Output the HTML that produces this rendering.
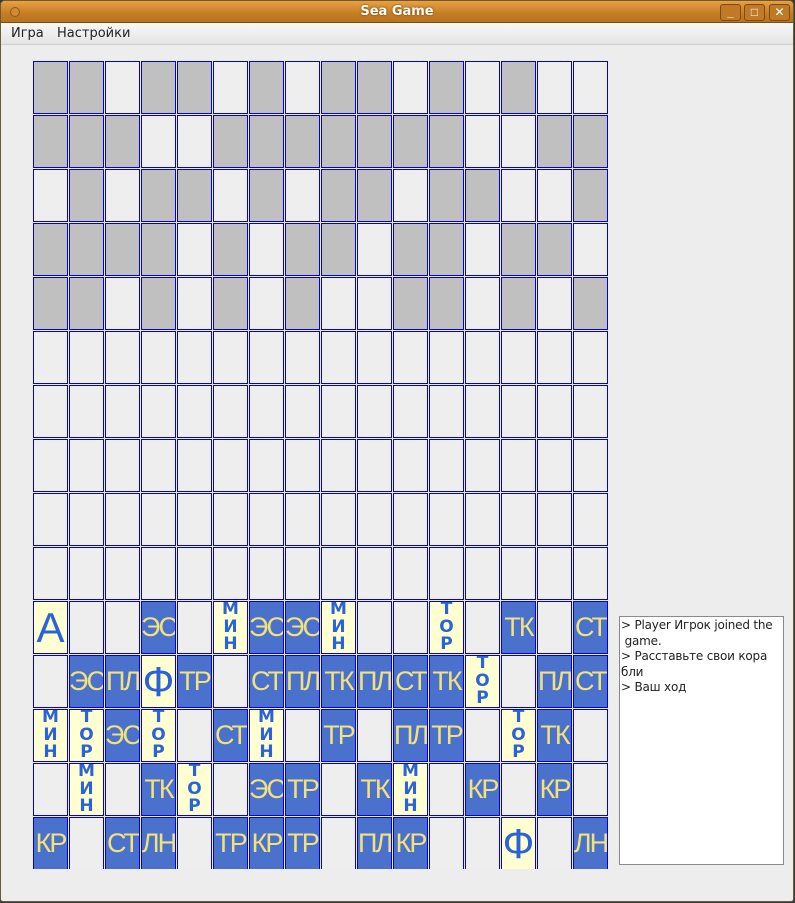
<!DOCTYPE html>
<html><head><meta charset="utf-8"><style>
*{margin:0;padding:0;box-sizing:border-box}
body{width:795px;height:903px;background:#3a3a3a;font-family:"Liberation Sans","DejaVu Sans",sans-serif;overflow:hidden;position:relative}
#win{position:absolute;left:0;top:0;width:794px;height:902px;background:#ededed;border:1px solid #6a5a3a;border-radius:5px 5px 3px 3px;overflow:hidden}
#title{position:absolute;left:0;top:0;width:100%;height:22px;background:linear-gradient(#e9a040,#c57d25 60%,#b8721f);border-bottom:1px solid #7a4e15}
#title .t{position:absolute;left:0;right:0;top:3px;text-align:center;color:#fff;font-weight:bold;font-size:13px;font-family:"DejaVu Sans",sans-serif;text-shadow:0 0 2px #6a3a00}
#title .c{position:absolute;left:9px;top:6px;width:10px;height:10px;border-radius:50%;border:1px solid #8a5a20;background:#d08a30}
.btn{position:absolute;top:3px;width:21px;height:17px;border:1px solid #7a4a10;border-radius:3px;background:#c07a25;color:#fff;font-size:12px;text-align:center;line-height:15px;font-weight:bold}
#menu{position:absolute;left:0;top:22px;width:100%;height:22px;background:linear-gradient(#f8f8f8,#e4e4e4);border-bottom:1px solid #cfcfcf;font-size:13px;color:#222;font-family:"DejaVu Sans",sans-serif}
#menu span{position:absolute;top:3px}
#grid{position:absolute;left:32px;top:60px;width:576px;height:808px;overflow:hidden;display:grid;grid-template-columns:repeat(16,35px);grid-auto-rows:53px;gap:1px}
#grid div{border:1px solid #0000e0;display:flex;align-items:center;justify-content:center;text-align:center;overflow:hidden;white-space:nowrap}
.g{background:#c0c0c0}.w{background:#eeeeee}
.b{background:#4a72cc;color:#f2e27a;font-size:27px;letter-spacing:-2px}
.y{background:#ffffd2;color:#2a62d8}
.v{font-size:17px;font-weight:bold;line-height:17.5px;white-space:normal!important;width:35px;font-family:"DejaVu Sans",sans-serif}
.big{font-size:42px}
#log{position:absolute;left:618px;top:615px;width:165px;height:249px;background:#fff;border:1px solid #8a8a8a;font-size:12px;line-height:15.5px;color:#222;padding:1px 0 0 1px;font-family:"DejaVu Sans",sans-serif;letter-spacing:-.2px}
</style></head><body><div id="win">
<div id="title"><div class="c"></div><div class="t">Sea Game</div>
<div class="btn" style="left:719px">_</div><div class="btn" style="left:743px">□</div><div class="btn" style="left:768px">✕</div></div>
<div id="menu"><span style="left:10px">Игра</span><span style="left:56px">Настройки</span></div>
<div id="grid">
<div class="g"></div><div class="g"></div><div class="w"></div><div class="g"></div><div class="g"></div><div class="w"></div><div class="g"></div><div class="w"></div><div class="g"></div><div class="g"></div><div class="w"></div><div class="g"></div><div class="w"></div><div class="g"></div><div class="w"></div><div class="w"></div>
<div class="g"></div><div class="g"></div><div class="g"></div><div class="w"></div><div class="w"></div><div class="g"></div><div class="g"></div><div class="g"></div><div class="g"></div><div class="g"></div><div class="g"></div><div class="g"></div><div class="w"></div><div class="w"></div><div class="g"></div><div class="g"></div>
<div class="w"></div><div class="g"></div><div class="w"></div><div class="g"></div><div class="g"></div><div class="w"></div><div class="g"></div><div class="w"></div><div class="g"></div><div class="g"></div><div class="w"></div><div class="g"></div><div class="g"></div><div class="w"></div><div class="w"></div><div class="g"></div>
<div class="g"></div><div class="g"></div><div class="g"></div><div class="g"></div><div class="w"></div><div class="g"></div><div class="w"></div><div class="g"></div><div class="g"></div><div class="w"></div><div class="g"></div><div class="g"></div><div class="w"></div><div class="g"></div><div class="g"></div><div class="w"></div>
<div class="g"></div><div class="g"></div><div class="w"></div><div class="g"></div><div class="w"></div><div class="g"></div><div class="w"></div><div class="g"></div><div class="w"></div><div class="w"></div><div class="g"></div><div class="g"></div><div class="w"></div><div class="g"></div><div class="w"></div><div class="g"></div>
<div class="w"></div><div class="w"></div><div class="w"></div><div class="w"></div><div class="w"></div><div class="w"></div><div class="w"></div><div class="w"></div><div class="w"></div><div class="w"></div><div class="w"></div><div class="w"></div><div class="w"></div><div class="w"></div><div class="w"></div><div class="w"></div>
<div class="w"></div><div class="w"></div><div class="w"></div><div class="w"></div><div class="w"></div><div class="w"></div><div class="w"></div><div class="w"></div><div class="w"></div><div class="w"></div><div class="w"></div><div class="w"></div><div class="w"></div><div class="w"></div><div class="w"></div><div class="w"></div>
<div class="w"></div><div class="w"></div><div class="w"></div><div class="w"></div><div class="w"></div><div class="w"></div><div class="w"></div><div class="w"></div><div class="w"></div><div class="w"></div><div class="w"></div><div class="w"></div><div class="w"></div><div class="w"></div><div class="w"></div><div class="w"></div>
<div class="w"></div><div class="w"></div><div class="w"></div><div class="w"></div><div class="w"></div><div class="w"></div><div class="w"></div><div class="w"></div><div class="w"></div><div class="w"></div><div class="w"></div><div class="w"></div><div class="w"></div><div class="w"></div><div class="w"></div><div class="w"></div>
<div class="w"></div><div class="w"></div><div class="w"></div><div class="w"></div><div class="w"></div><div class="w"></div><div class="w"></div><div class="w"></div><div class="w"></div><div class="w"></div><div class="w"></div><div class="w"></div><div class="w"></div><div class="w"></div><div class="w"></div><div class="w"></div>

<div class="y big">А</div><div class="w"></div><div class="w"></div><div class="b">ЭС</div><div class="w"></div><div class="y v">М<br>И<br>Н</div><div class="b">ЭС</div><div class="b">ЭС</div><div class="y v">М<br>И<br>Н</div><div class="w"></div><div class="w"></div><div class="y v">Т<br>О<br>Р</div><div class="w"></div><div class="b">ТК</div><div class="w"></div><div class="b">СТ</div>

<div class="w"></div><div class="b">ЭС</div><div class="b">ПЛ</div><div class="y big">Ф</div><div class="b">ТР</div><div class="w"></div><div class="b">СТ</div><div class="b">ПЛ</div><div class="b">ТК</div><div class="b">ПЛ</div><div class="b">СТ</div><div class="b">ТК</div><div class="y v">Т<br>О<br>Р</div><div class="w"></div><div class="b">ПЛ</div><div class="b">СТ</div>

<div class="y v">М<br>И<br>Н</div><div class="y v">Т<br>О<br>Р</div><div class="b">ЭС</div><div class="y v">Т<br>О<br>Р</div><div class="w"></div><div class="b">СТ</div><div class="y v">М<br>И<br>Н</div><div class="w"></div><div class="b">ТР</div><div class="w"></div><div class="b">ПЛ</div><div class="b">ТР</div><div class="w"></div><div class="y v">Т<br>О<br>Р</div><div class="b">ТК</div><div class="w"></div>

<div class="w"></div><div class="y v">М<br>И<br>Н</div><div class="w"></div><div class="b">ТК</div><div class="y v">Т<br>О<br>Р</div><div class="w"></div><div class="b">ЭС</div><div class="b">ТР</div><div class="w"></div><div class="b">ТК</div><div class="y v">М<br>И<br>Н</div><div class="w"></div><div class="b">КР</div><div class="w"></div><div class="b">КР</div><div class="w"></div>

<div class="b">КР</div><div class="w"></div><div class="b">СТ</div><div class="b">ЛН</div><div class="w"></div><div class="b">ТР</div><div class="b">КР</div><div class="b">ТР</div><div class="w"></div><div class="b">ПЛ</div><div class="b">КР</div><div class="w"></div><div class="w"></div><div class="y big">Ф</div><div class="w"></div><div class="b">ЛН</div>
</div>
<div id="log">&gt; Player Игрок joined the<br>&nbsp;game.<br>&gt; Расставьте свои кора<br>бли<br>&gt; Ваш ход</div>
</div></body></html>
